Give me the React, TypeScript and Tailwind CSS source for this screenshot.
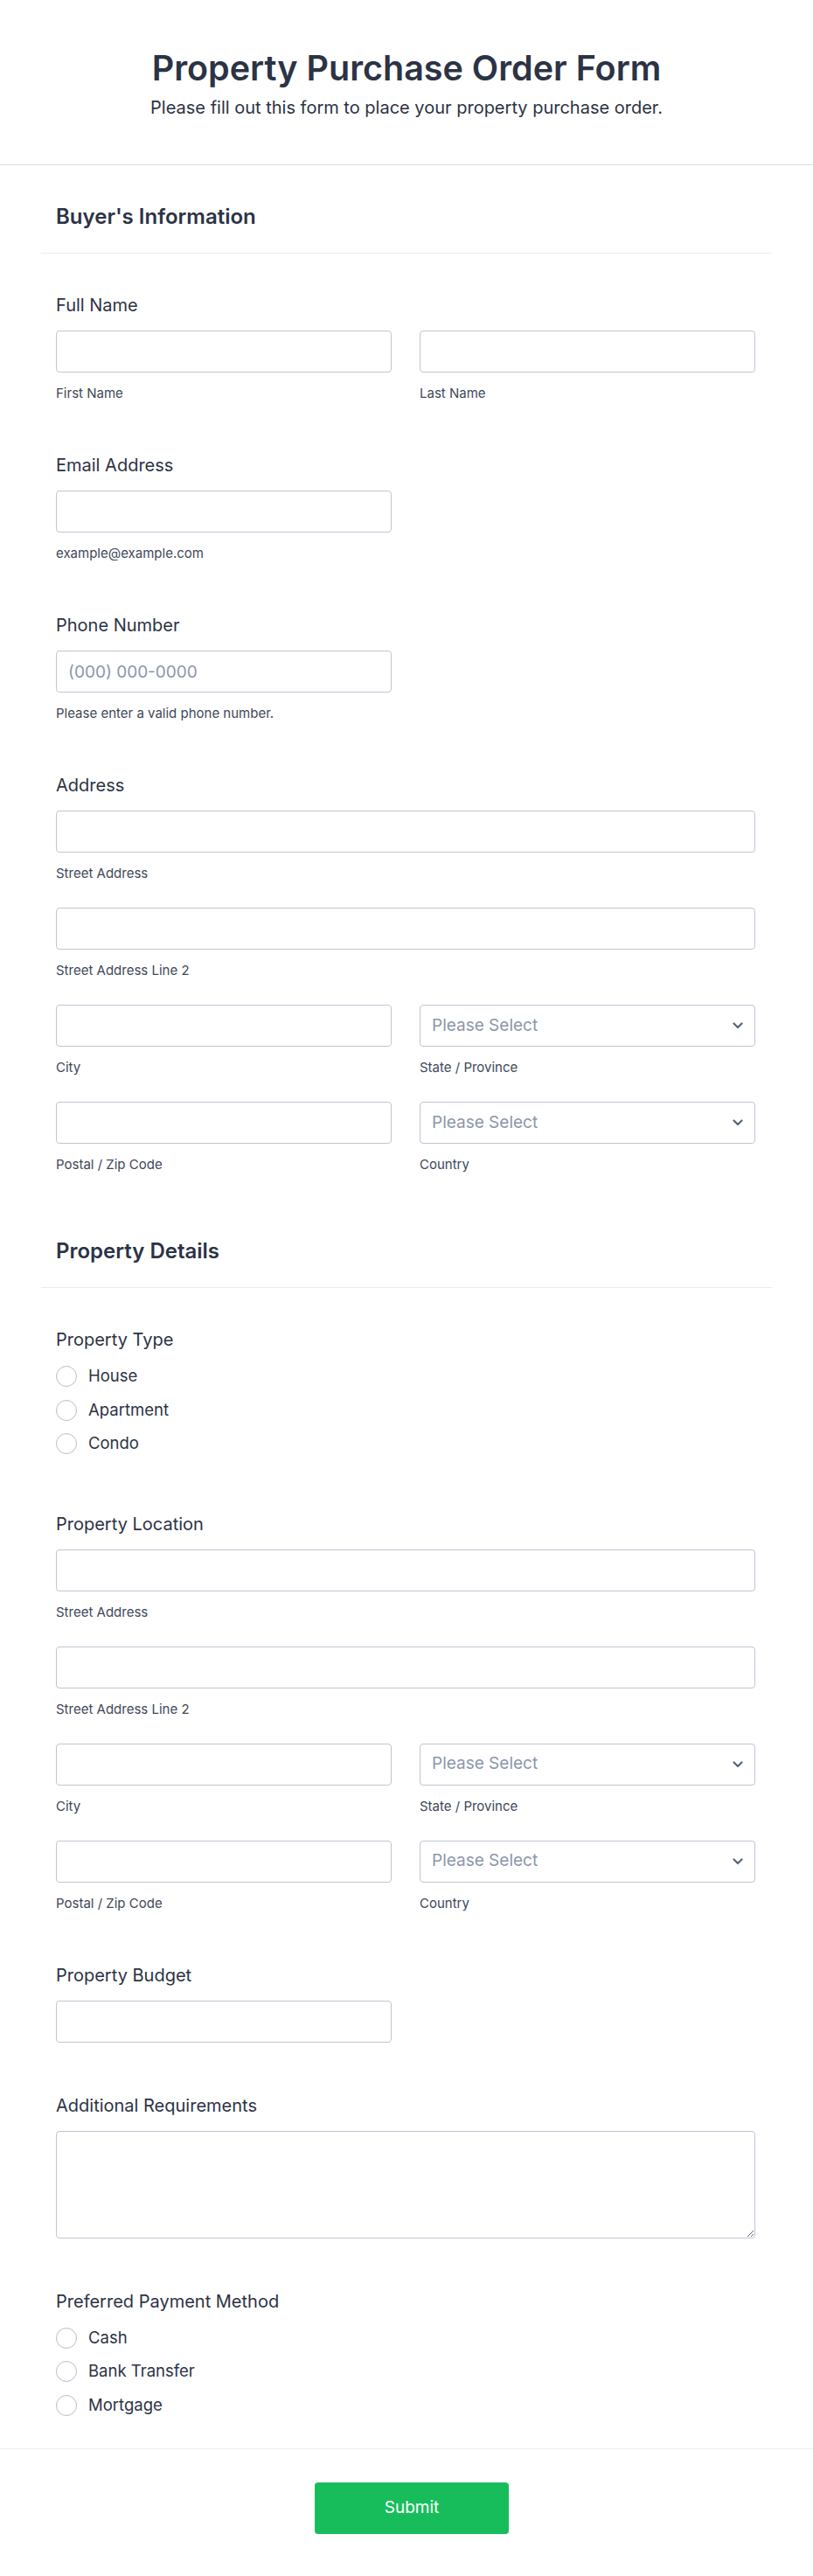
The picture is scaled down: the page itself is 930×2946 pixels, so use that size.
import React from "react";

const font = { fontFamily: "Inter, 'Noto Sans', sans-serif" };

function Label({ children }: { children: React.ReactNode }) {
  return <div className="text-[20px] leading-6 font-normal text-[#2c3345]">{children}</div>;
}

function Sub({ children }: { children: React.ReactNode }) {
  return <div className="mt-[14px] text-[15px] leading-5 text-[#404859]">{children}</div>;
}

function TextInput({ placeholder }: { placeholder?: string }) {
  return (
    <input
      type="text"
      placeholder={placeholder}
      className="w-full h-12 rounded-[4px] border border-[#bfc5d2] bg-white px-[13px] text-[19px] text-[#2c3345] placeholder:text-[#8c96ab] outline-none"
    />
  );
}

function Select() {
  return (
    <div className="relative">
      <select
        defaultValue=""
        className="w-full h-12 appearance-none rounded-[4px] border border-[#bfc5d2] bg-white pl-[13px] pr-10 text-[19px] text-[#8c96ab] outline-none"
      >
        <option value="" disabled>
          Please Select
        </option>
      </select>
      <svg
        className="pointer-events-none absolute right-[14px] top-1/2 -translate-y-1/2"
        width="12"
        height="8"
        viewBox="0 0 12 8"
        fill="none"
      >
        <path d="M1.5 1.5L6 6L10.5 1.5" stroke="#57647e" strokeWidth="2.2" strokeLinecap="round" strokeLinejoin="round" />
      </svg>
    </div>
  );
}

function Field({ children }: { children: React.ReactNode }) {
  return <div className="py-[30px]">{children}</div>;
}

function SectionHead({ title }: { title: string }) {
  return (
    <div className="mx-[47px] px-[17px] pt-[43px] pb-[25px] border-b border-[#ecedf2]">
      <h2 className="text-[24px] leading-8 font-semibold text-[#2c3345]">{title}</h2>
    </div>
  );
}

function AddressBlock({ label }: { label: string }) {
  return (
    <Field>
      <Label>{label}</Label>
      <div className="mt-[17px]">
        <TextInput />
        <Sub>Street Address</Sub>
      </div>
      <div className="mt-[29px]">
        <TextInput />
        <Sub>Street Address Line 2</Sub>
      </div>
      <div className="mt-[29px] grid grid-cols-2 gap-x-[32px]">
        <div>
          <TextInput />
          <Sub>City</Sub>
        </div>
        <div>
          <Select />
          <Sub>State / Province</Sub>
        </div>
      </div>
      <div className="mt-[29px] grid grid-cols-2 gap-x-[32px]">
        <div>
          <TextInput />
          <Sub>Postal / Zip Code</Sub>
        </div>
        <div>
          <Select />
          <Sub>Country</Sub>
        </div>
      </div>
    </Field>
  );
}

function RadioGroup({ label, options }: { label: string; options: string[] }) {
  return (
    <Field>
      <Label>{label}</Label>
      <div className="mt-[11px]">
        {options.map((o) => (
          <label key={o} className="flex h-[38.5px] items-center gap-[13px] cursor-pointer">
            <span className="h-6 w-6 rounded-full border-[1.5px] border-[#b8bdc9] bg-white" />
            <span className="text-[18.5px] text-[#2c3345]">{o}</span>
          </label>
        ))}
      </div>
    </Field>
  );
}

export default function App() {
  return (
    <div className="min-h-[2946px] bg-white" style={font}>
      <header className="border-b border-[#d8dce6] pt-[54px] pb-[51px] text-center">
        <h1 className="text-[39.5px] leading-[48px] font-semibold text-[#2c3345]">
          Property Purchase Order Form
        </h1>
        <p className="mt-[7px] text-[20px] leading-7 font-normal text-[#2c3345]">
          Please fill out this form to place your property purchase order.
        </p>
      </header>

      <SectionHead title="Buyer's Information" />
      <div className="pl-[64px] pr-[66px] pt-[17px]">
        <Field>
          <Label>Full Name</Label>
          <div className="mt-[17px] grid grid-cols-2 gap-x-[32px]">
            <div>
              <TextInput />
              <Sub>First Name</Sub>
            </div>
            <div>
              <TextInput />
              <Sub>Last Name</Sub>
            </div>
          </div>
        </Field>
        <Field>
          <Label>Email Address</Label>
          <div className="mt-[17px] w-[384px]">
            <TextInput />
            <Sub>example@example.com</Sub>
          </div>
        </Field>
        <Field>
          <Label>Phone Number</Label>
          <div className="mt-[17px] w-[384px]">
            <TextInput placeholder="(000) 000-0000" />
            <Sub>Please enter a valid phone number.</Sub>
          </div>
        </Field>
        <AddressBlock label="Address" />
      </div>

      <SectionHead title="Property Details" />
      <div className="pl-[64px] pr-[66px] pt-[17px]">
        <RadioGroup label="Property Type" options={["House", "Apartment", "Condo"]} />
        <AddressBlock label="Property Location" />
        <Field>
          <Label>Property Budget</Label>
          <div className="mt-[17px] w-[384px]">
            <TextInput />
          </div>
        </Field>
        <Field>
          <Label>Additional Requirements</Label>
          <textarea className="mt-[17px] block w-full h-[123px] rounded-[4px] border border-[#bfc5d2] bg-white px-[13px] py-2 text-[19px] outline-none" />
        </Field>
        <RadioGroup label="Preferred Payment Method" options={["Cash", "Bank Transfer", "Mortgage"]} />
      </div>

      <div className="border-t border-[#eceef3] pt-[38px] pb-[50px] pl-[12px] flex justify-center">
        <button
          type="button"
          className="h-[59px] w-[222px] rounded-[4px] bg-[#18bd5b] text-[19px] font-normal text-white"
        >
          Submit
        </button>
      </div>
    </div>
  );
}
